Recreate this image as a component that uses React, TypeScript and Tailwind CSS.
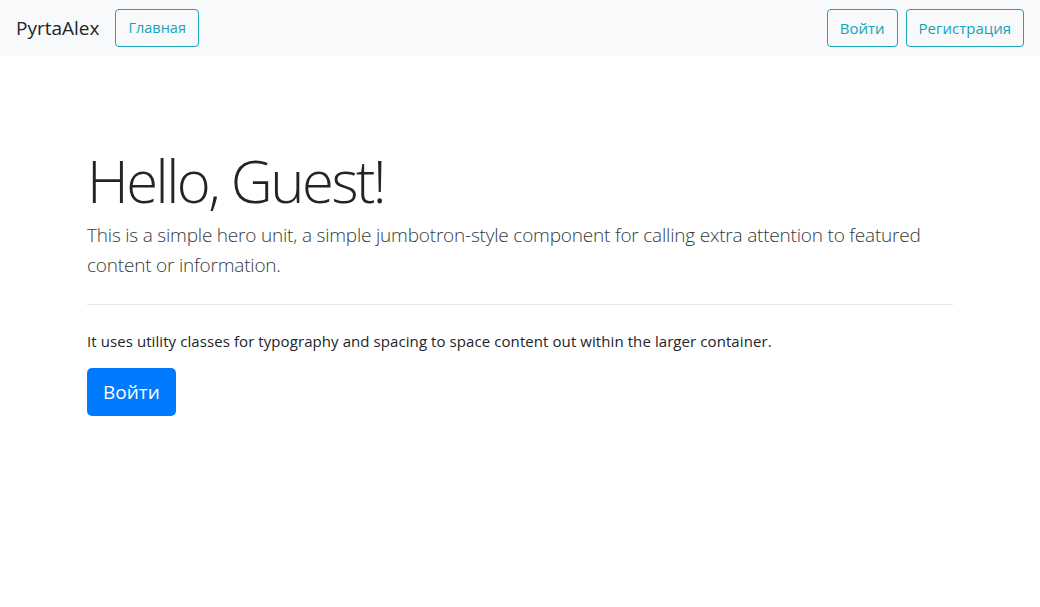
import React from "react";

export default function App() {
  return (
    <main className="min-h-screen bg-white font-['Open_Sans',sans-serif] text-[#212529]">
      {/* navbar */}
      <nav className="flex h-[56px] items-center justify-between bg-[#f8f9fa] px-4">
        <div className="flex items-center">
          <a href="#" className="mr-4 text-[19px] leading-[30px] text-[#212529]">
            PyrtaAlex
          </a>
          <button className="h-[38px] rounded border border-[#17a2b8] px-3 text-[14.5px] text-[#17a2b8]">
            Главная
          </button>
        </div>

        <div className="flex items-center gap-2">
          <button className="h-[38px] rounded border border-[#17a2b8] px-3 text-[15px] text-[#17a2b8]">
            Войти
          </button>
          <button className="h-[38px] rounded border border-[#17a2b8] px-3 text-[15px] text-[#17a2b8]">
            Регистрация
          </button>
        </div>
      </nav>

      {/* jumbotron */}
      <section className="mx-auto w-[960px] px-[15px]">
        <div className="px-8 pb-16 pt-[89px]">
          <h1 className="mb-[3px] text-[58px] font-light leading-[72px] tracking-[-2.5px]">
            Hello, Guest!
          </h1>
          <p className="text-[19px] font-light leading-[30px] tracking-[-0.2px] text-[#343a40]">
            This is a simple hero unit, a simple jumbotron-style component for calling extra attention to featured
            <br />
            content or information.
          </p>
          <hr className="my-6 border-t border-[rgba(0,0,0,0.1)]" />
          <p className="mb-[15px] text-[15px] leading-[24px] tracking-[0.08px]">
            It uses utility classes for typography and spacing to space content out within the larger container.
          </p>
          <button className="h-[48px] rounded-[5px] bg-[#007bff] px-4 text-[19px] text-white">
            Войти
          </button>
        </div>
      </section>
    </main>
  );
}
